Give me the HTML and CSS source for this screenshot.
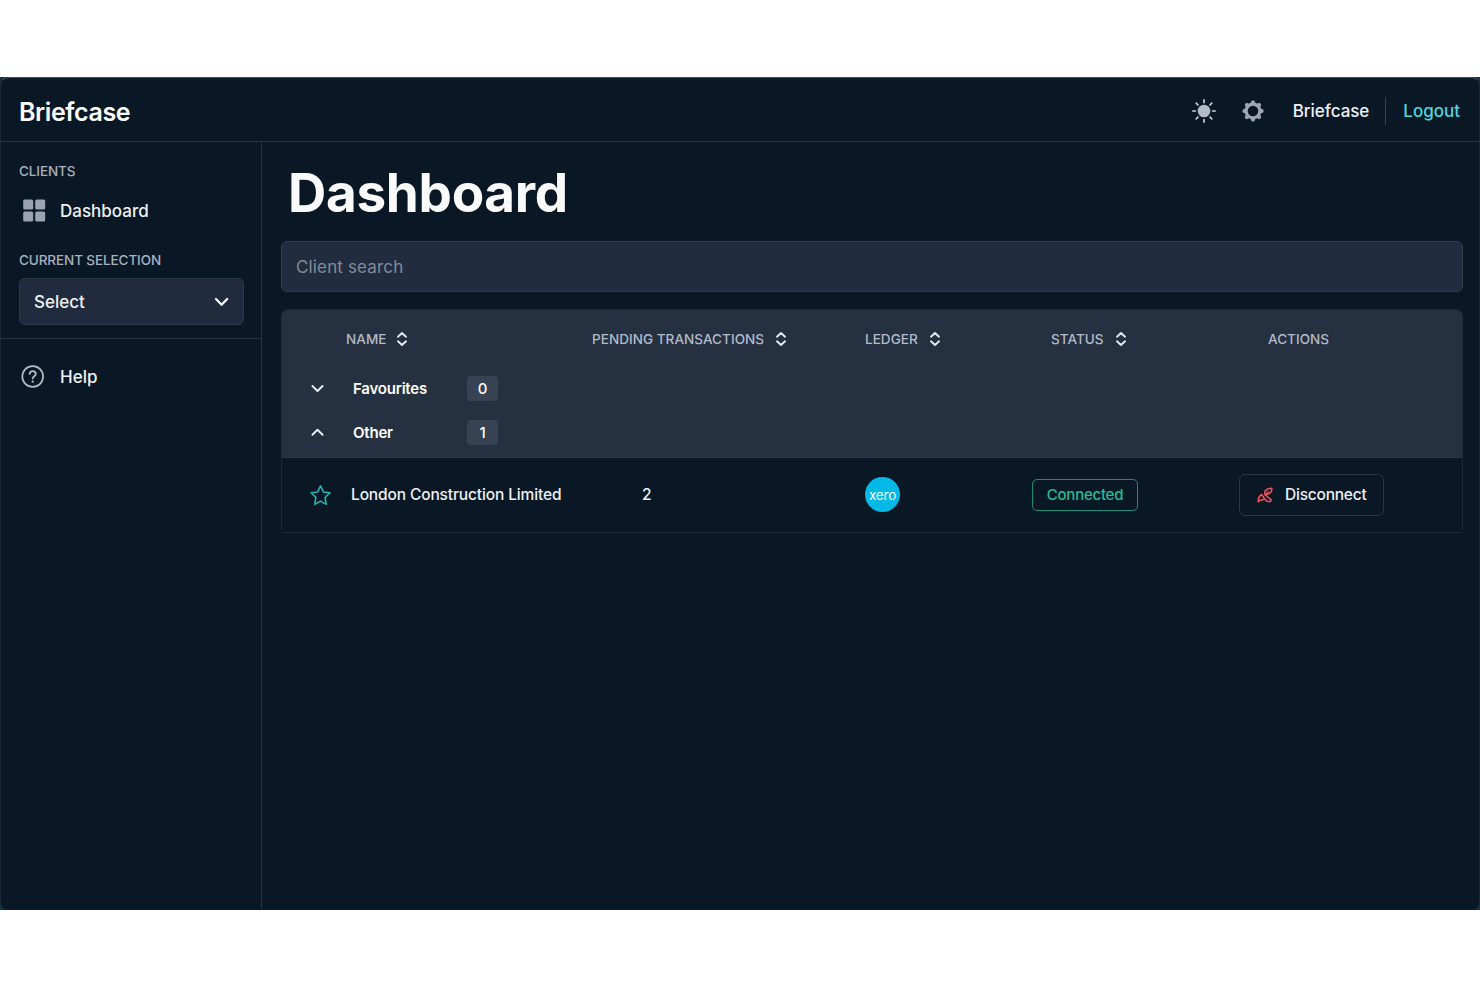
FILE: index.html
```
<!DOCTYPE html>
<html lang="en">
<head>
    <meta charset="UTF-8">
    <meta name="viewport" content="width=device-width, initial-scale=1.0">
    <title>Briefcase</title>
    <link rel="stylesheet" href="styles.css">
</head>
<body>
    <div class="frame">
    <div class="app">
        <header class="topbar">
            <div class="brand">Briefcase</div>
            <nav class="topnav">
                <svg class="icon-sun" width="24" height="24" viewBox="0 0 24 24" fill="none" stroke="#c9ced8" stroke-width="1.7" stroke-linecap="round">
                    <circle cx="12" cy="12" r="6.3" fill="#b4bac6" stroke="none"/>
                    <path d="M12 .9v2.5M12 20.6v2.5M.9 12h2.5M20.6 12h2.5M4.2 4.2l1.7 1.7M18.1 18.1l1.7 1.7M4.2 19.8l1.7-1.7M18.1 5.9l1.7-1.7"/>
                </svg>
                <svg class="icon-gear" width="22" height="22" viewBox="0 0 22 22">
                    <circle cx="11" cy="11" r="6.9" fill="none" stroke="#a0a7b4" stroke-width="3.2"/>
                    <g fill="#a0a7b4">
                        <path id="tooth" d="M8.800 3L9.500.8Q11 0 12.500.8L13.200 3z"/>
                        <use href="#tooth" transform="rotate(45 11 11)"/>
                        <use href="#tooth" transform="rotate(90 11 11)"/>
                        <use href="#tooth" transform="rotate(135 11 11)"/>
                        <use href="#tooth" transform="rotate(180 11 11)"/>
                        <use href="#tooth" transform="rotate(225 11 11)"/>
                        <use href="#tooth" transform="rotate(270 11 11)"/>
                        <use href="#tooth" transform="rotate(315 11 11)"/>
                    </g>
                </svg>
                <span class="user">Briefcase</span>
                <a class="logout" href="#">Logout</a>
            </nav>
        </header>

        <div class="layout">
            <aside class="sidebar">
                <div class="sidebar-top">
                    <h2 class="label">CLIENTS</h2>
                    <a class="nav-item" href="#">
                        <svg width="24" height="24" viewBox="0 0 24 24" fill="#9ba3b1">
                            <rect x="1.200" y=".5" width="10" height="10" rx="1.6"/>
                            <rect x="13.200" y=".5" width="10" height="10" rx="1.6"/>
                            <rect x="1.200" y="12.500" width="10" height="10" rx="1.6"/>
                            <rect x="13.200" y="12.500" width="10" height="10" rx="1.6"/>
                        </svg>
                        <span>Dashboard</span>
                    </a>
                    <h2 class="label label-selection">CURRENT SELECTION</h2>
                    <button class="select">
                        <span>Select</span>
                        <svg width="16" height="16" viewBox="0 0 16 16" fill="none" stroke="#fff" stroke-width="2.2" stroke-linecap="round" stroke-linejoin="round">
                            <path d="M2 5L7.600 10.800l5.600-5.800"/>
                        </svg>
                    </button>
                </div>
                <a class="nav-item help" href="#">
                    <svg width="24" height="24" viewBox="0 0 24 24" fill="none" stroke="#b4bac6" stroke-width="1.7" stroke-linecap="round" stroke-linejoin="round">
                        <circle cx="11.700" cy="11.500" r="10.400"/>
                        <path stroke-width="1.800" d="M8.700 8.900c.2-1.800 1.500-2.700 3-2.700 1.800 0 3.100 1.100 3.100 2.700 0 2.300-3.100 2.300-3.100 4.600"/>
                        <circle cx="11.700" cy="16.700" r="1.100" fill="#b4bac6" stroke="none"/>
                    </svg>
                    <span>Help</span>
                </a>
            </aside>

            <main class="content">
                <h1>Dashboard</h1>
                <input class="search" type="text" placeholder="Client search">

                <section class="table">
                    <div class="table-head">
                        <div class="row columns">
                            <span></span>
                            <span class="th th-name">NAME
                                <svg class="sort" viewBox="0 0 12 16"><path d="M2 5.700l4-3.600 4 3.600M2 10.300l4 3.600 4-3.600"/></svg>
                            </span>
                            <span class="th">PENDING TRANSACTIONS
                                <svg class="sort" viewBox="0 0 12 16"><path d="M2 5.700l4-3.600 4 3.600M2 10.300l4 3.600 4-3.600"/></svg>
                            </span>
                            <span class="th">LEDGER
                                <svg class="sort" viewBox="0 0 12 16"><path d="M2 5.700l4-3.600 4 3.600M2 10.300l4 3.600 4-3.600"/></svg>
                            </span>
                            <span class="th th-status">STATUS
                                <svg class="sort" viewBox="0 0 12 16"><path d="M2 5.700l4-3.600 4 3.600M2 10.300l4 3.600 4-3.600"/></svg>
                            </span>
                            <span class="th th-actions">ACTIONS</span>
                        </div>
                        <div class="group">
                            <svg class="chevron" viewBox="0 0 14 14"><path d="M2.400 5L7.500 10l5.100-5"/></svg>
                            <span class="group-name">Favourites</span>
                            <span class="count">0</span>
                        </div>
                        <div class="group">
                            <svg class="chevron" viewBox="0 0 14 14"><path d="M2.400 9.800l5.100-5 5.100 5"/></svg>
                            <span class="group-name">Other</span>
                            <span class="count">1</span>
                        </div>
                    </div>
                    <div class="row client">
                        <span class="star">
                            <svg width="22" height="22" viewBox="0 0 22 22" fill="none" stroke="#23b7b4" stroke-width="1.5" stroke-linejoin="round">
                                <path d="M11.500 1.800l2.800 6.100 6.700.9-4.900 4.700 1.200 6.800-5.800-3.200-5.800 3.200 1.200-6.800L2 8.800l6.700-.9z"/>
                            </svg>
                        </span>
                        <span class="client-name">London Construction Limited</span>
                        <span class="pending">2</span>
                        <span><span class="xero">xero</span></span>
                        <span><span class="status">Connected</span></span>
                        <span>
                            <button class="disconnect">
                                <svg width="16" height="16" viewBox="0 0 16 16" fill="none" stroke="#f0525f" stroke-width="1.5" stroke-linecap="round" stroke-linejoin="round">
                                    <path d="M1.200 14.800c-.2-3 .8-5.600 3.400-7.300l3 4.300c-1.800 1-3.800 1.500-5 1.600z"/>
                                    <path d="M8.300 8C6.600 4.700 8.600 1.400 14.800 1.300c.4 3.300-2 5.800-6.500 6.700l5.900 4.800-.5 1.600-3.900-.2-2.200-2.400"/>
                                    <path d="M8.300 8L11 4.900"/>
                                </svg>
                                Disconnect
                            </button>
                        </span>
                    </div>
                </section>
            </main>
        </div>
    </div>
    </div>
</body>
</html>
```
FILE: styles.css
```
* {
    box-sizing: border-box;
}

body {
    margin: 0;
    padding-top: 77px;
    background: #fff;
    font-family: Inter, sans-serif;
    font-size: 17px;
    font-weight: 500;
    color: #eef0f4;
}

a {
    color: inherit;
    text-decoration: none;
}

button, input {
    font: inherit;
    color: inherit;
}

svg {
    display: block;
    flex-shrink: 0;
}

.frame {
    background: #12343f;
}

.app {
    height: 833px;
    display: flex;
    flex-direction: column;
    background: #0a1826;
    border: 1px solid #1b2937;
    border-top-color: #42505c;
    border-bottom: none;
    border-radius: 8px;
}

/* Top bar */
.topbar {
    height: 64px;
    padding: 0 19px 0 18px;
    display: flex;
    align-items: center;
    justify-content: space-between;
    border-bottom: 1px solid #253341;
}

.brand {
    padding-top: 4px;
    font-size: 25px;
    font-weight: 600;
    letter-spacing: -0.4px;
    color: #fff;
}

.topnav {
    padding-top: 2px;
    display: flex;
    align-items: center;
}

.icon-gear {
    margin-left: 26px;
}

.user {
    margin-left: 29px;
    padding-right: 16px;
    letter-spacing: -0.05px;
}

.logout {
    padding: 4px 0 4px 17px;
    border-left: 1px solid #354250;
    color: #4fd5dd;
}

/* Sidebar */
.layout {
    flex: 1;
    display: flex;
}

.sidebar {
    width: 261px;
    border-right: 1px solid #253341;
}

.sidebar-top {
    padding: 20px 17px 13px 18px;
    border-bottom: 1px solid #253341;
}

.label {
    margin: 0;
    font-size: 13.5px;
    line-height: 18px;
    font-weight: 500;
    letter-spacing: -0.1px;
    color: #a9b1be;
}

.nav-item {
    height: 24px;
    margin-top: 19px;
    padding-left: 3px;
    display: flex;
    align-items: center;
    gap: 14px;
}

.label-selection {
    margin-top: 28px;
}

.select {
    width: 100%;
    height: 47px;
    margin-top: 9px;
    padding: 0 13px 0 14px;
    display: flex;
    align-items: center;
    justify-content: space-between;
    background: #202c3d;
    border: 1px solid #2c3949;
    border-radius: 6px;
}

.help {
    margin-top: 26px;
    padding-left: 20px;
    gap: 15px;
}

/* Main content */
.content {
    flex: 1;
    padding: 19px 16px 0 19px;
}

h1 {
    margin: 0 0 16px 7px;
    font-size: 53px;
    line-height: 64px;
    font-weight: 700;
    letter-spacing: -0.3px;
    color: #fafafa;
}

.search {
    display: block;
    width: 100%;
    height: 51px;
    padding: 0 14px;
    background: #212d3e;
    border: 1px solid #303d4c;
    border-radius: 6px;
    font-weight: 400;
    letter-spacing: 0.15px;
}

.search::placeholder {
    color: #838b99;
    opacity: 1;
}

/* Client table */
.table {
    margin-top: 17px;
    border: 1px solid #1d2a38;
    border-radius: 7px 7px 2px 2px;
    overflow: hidden;
}

.table-head {
    height: 148px;
    background: #253041;
    border-bottom: 1px solid #2a3746;
}

.row {
    display: grid;
    grid-template-columns: 64px 246px 273px 167px 207px 1fr;
    align-items: center;
}

.columns {
    height: 56px;
    padding-top: 2px;
}

.th {
    display: flex;
    align-items: center;
    gap: 11px;
    font-size: 13.5px;
    letter-spacing: 0.05px;
    color: #b4bbc8;
}

.th-name {
    gap: 10px;
}

.th-status {
    padding-left: 19px;
}

.th-actions {
    padding-left: 29px;
}

.sort {
    width: 12px;
    height: 16px;
    fill: none;
    stroke: #e4e8ee;
    stroke-width: 2;
    stroke-linecap: round;
    stroke-linejoin: round;
}

.group {
    height: 44px;
    padding-left: 28px;
    display: flex;
    align-items: center;
    font-size: 15px;
    font-weight: 600;
    letter-spacing: -0.2px;
    color: #fff;
}

.chevron {
    width: 14px;
    height: 14px;
    margin-right: 29px;
    fill: none;
    stroke: #eef0f4;
    stroke-width: 1.9;
    stroke-linecap: round;
    stroke-linejoin: round;
}

.group-name {
    width: 114px;
}

.count {
    width: 31px;
    height: 25px;
    display: grid;
    place-items: center;
    background: #374353;
    border-radius: 4px;
    font-weight: 500;
}

.client {
    height: 74px;
    padding-bottom: 1px;
    font-size: 15.5px;
}

.star {
    padding-left: 27px;
}

.client-name {
    padding-left: 5px;
    letter-spacing: -0.13px;
}

.pending {
    padding-left: 50px;
}

.xero {
    width: 35px;
    height: 35px;
    display: grid;
    place-items: center;
    background: #00b9e6;
    border-radius: 50%;
    font-size: 13.5px;
    font-weight: 400;
    line-height: 32px;
    letter-spacing: -0.2px;
    color: #fff;
}

.status {
    width: 106px;
    height: 32px;
    display: grid;
    place-items: center;
    border: 1px solid #1a8b7c;
    border-radius: 5px;
    font-size: 15px;
    letter-spacing: -0.25px;
    color: #22bd97;
}

.disconnect {
    width: 145px;
    height: 42px;
    padding: 0 0 0 17px;
    display: flex;
    align-items: center;
    gap: 12px;
    background: none;
    border: 1px solid #293644;
    border-radius: 6px;
    letter-spacing: -0.22px;
}
```
